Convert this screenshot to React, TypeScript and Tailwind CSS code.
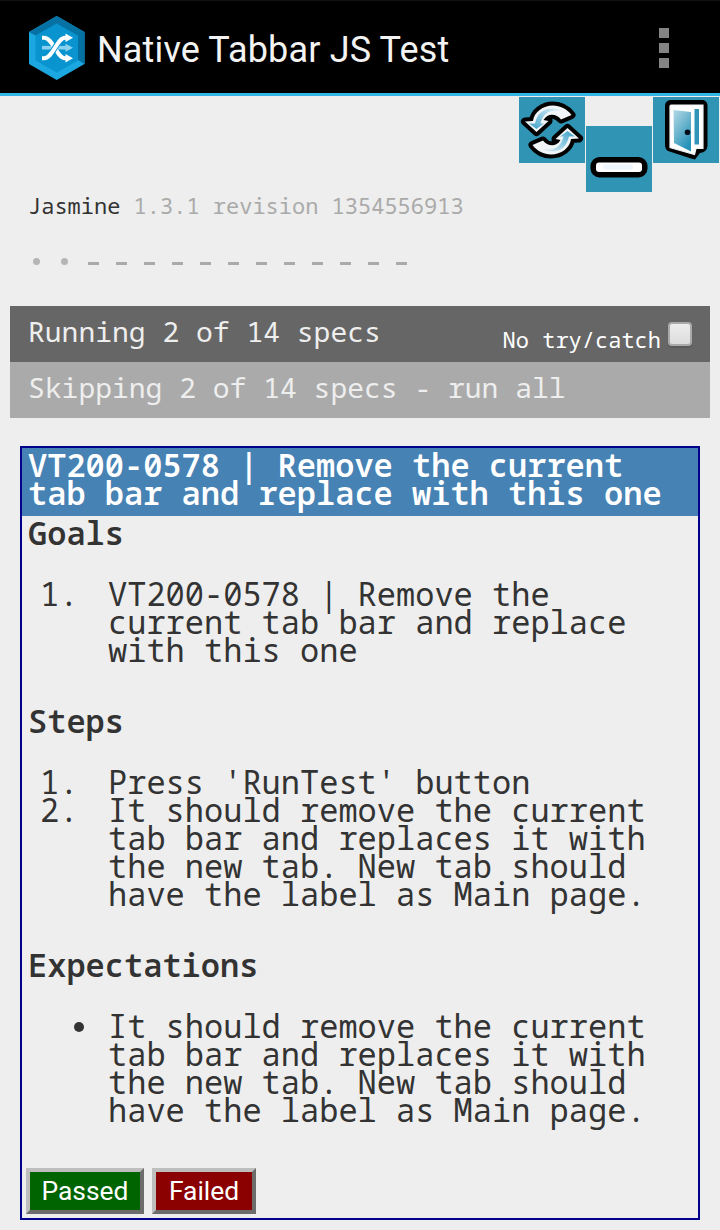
import React from "react";

function AppIcon() {
  return (
    <svg width="58" height="66" viewBox="28 15 58 66" className="shrink-0">
      <path d="M56.700 16 L84.500 32 V64 L56.700 80 L29 64 V32Z" fill="#1ba8e0" />
      <path d="M29 32 L56.700 16 L84.500 32 V64 L78 60 L56.700 48 L35.500 35.500Z" fill="#0572a3" />
      <path d="M56.700 23.500 L78 35.500 V60.500 L56.700 72.500 L35.500 60.500 V35.500Z" fill="#0993cf" />
      <g fill="none" strokeWidth="4">
        <path d="M42 47.700H67" stroke="#8bd0ee" strokeWidth="3.6" />
        <path d="M65.500 43.700L73 47.700L65.500 51.700Z" fill="#8bd0ee" stroke="none" />
        <path d="M42 37.700H44C53 37.700 57 58.300 65 58.300H68" stroke="#fff" />
        <path d="M45 58C53 57 57 38.500 64 38" stroke="#0993cf" strokeWidth="6" />
        <path d="M42 58.300H44C53 58.300 57 37.700 65 37.700H68" stroke="#fff" />
        <path d="M65.500 33.400L73 37.700L65.500 42ZM65.500 54L73 58.300L65.500 62.600Z" fill="#fff" stroke="none" />
      </g>
    </svg>
  );
}

function CurvedArrow() {
  const shape = "M6 24.500L14 24C15 15 24 8.500 34 8.500C41 8.500 48 12 52.500 18L42 22.500C38 17 29 15 24.500 23L29.500 24L17.500 35Z";
  return (
    <>
      <path d={shape} fill="#000" stroke="#000" strokeWidth="8" strokeLinejoin="round" />
      <path d={shape} fill="#f1f5f7" />
      <path d="M10 26.500L16 26.500C18 17 24 11.500 33 11.500C37 11.500 40 12.500 42 14C31 12 24 16 21.500 26.500L25 26.500L17.500 32Z" fill="url(#arrow)" />
    </>
  );
}

function RefreshIcon() {
  return (
    <svg width="66" height="66" viewBox="0 0 66 66" className="bg-[#3094b5]">
      <defs>
        <linearGradient id="arrow" x1="0" y1="1" x2="1" y2="0">
          <stop offset="0" stopColor="#3f9fc6" />
          <stop offset=".5" stopColor="#8cc9e1" />
          <stop offset="1" stopColor="#e8f2f6" />
        </linearGradient>
      </defs>
      <CurvedArrow />
      <g transform="rotate(180 33 33)">
        <CurvedArrow />
      </g>
    </svg>
  );
}

function MinimizeIcon() {
  return (
    <svg width="66" height="66" viewBox="0 0 66 66" className="mt-[29px] bg-[#3094b5]">
      <rect x="4.500" y="31" width="57" height="20.500" rx="9" fill="#000" />
      <rect x="10" y="36.500" width="46" height="9.500" rx="3" fill="#fff" />
      <rect x="17" y="38.500" width="30" height="5" rx="2" fill="#eff5fd" />
    </svg>
  );
}

function DoorIcon() {
  return (
    <svg width="66" height="66" viewBox="0 0 66 66" className="bg-[#3094b5]">
      <defs>
        <linearGradient id="door" x1="0" y1="0" x2=".6" y2="1">
          <stop offset="0" stopColor="#b5d9e7" />
          <stop offset=".4" stopColor="#7dbdd3" />
          <stop offset="1" stopColor="#2793b9" />
        </linearGradient>
      </defs>
      <path d="M17 3H50Q54.500 4 54.500 9V49Q54 55 47 56L42 62.500L38 61.500L15 54Q12 52 12 48V9Q12 4 17 3Z" fill="#000" />
      <path d="M18 8H50V51.500H43L41.500 57.500L17 50.500V9Z" fill="#fff" stroke="#edf2f4" strokeWidth="1.200" />
      <path d="M20.500 13L38 15V54.500L21 46Z" fill="url(#door)" />
      <path d="M41.500 12H46V47.500H41.500Z" fill="#2f94b8" />
      <circle cx="34.500" cy="35.300" r="2.800" fill="#000d18" />
    </svg>
  );
}

function Header() {
  return (
    <header className="flex h-24 items-start border-b-[3px] border-t border-b-[#33b5e5] border-t-[#111] bg-black">
      <div className="flex h-full w-full items-center pl-7 pr-[51px] pt-[2px]">
        <AppIcon />
        <h1 className="ml-[11px] mt-[3px] whitespace-nowrap font-['Roboto',sans-serif] text-[36px] leading-[44px] tracking-[0.15px] text-[#f3f3f3]">
          Native Tabbar JS Test
        </h1>
        <div className="ml-auto flex flex-col gap-[5px]">
          {[0, 1, 2].map((n) => (
            <span key={n} className="size-[10px] bg-[#848484]" />
          ))}
        </div>
      </div>
    </header>
  );
}

function Lines({ lines }: { lines: string[] }) {
  return (
    <>
      {lines.map((line) => (
        <span key={line} className="block whitespace-nowrap">{line}</span>
      ))}
    </>
  );
}

function Item({ marker, lines }: { marker?: string; lines: string[] }) {
  return (
    <li className="flex">
      <span className="flex w-[86px] shrink-0 pl-[18px]">
        {marker ?? <span className="ml-[34px] mt-[10px] size-[10px] rounded-full bg-[#333]" />}
      </span>
      <div>
        <Lines lines={lines} />
      </div>
    </li>
  );
}

const result = [
  "It should remove the current",
  "tab bar and replaces it with",
  "the new tab. New tab should",
  "have the label as Main page.",
];

export default function App() {
  return (
    <div className="flex h-[1230px] w-[720px] flex-col overflow-hidden bg-[#eee] text-[#333] font-['Noto_Sans_Mono','DejaVu_Sans_Mono',monospace]">
      <Header />
      <div className="flex h-[95px] justify-end gap-px pr-px pt-px">
        <RefreshIcon />
        <MinimizeIcon />
        <DoorIcon />
      </div>
      <div className="h-7 whitespace-pre pl-7 text-[22px] leading-7">
        Jasmine <span className="text-[#aaa]">1.3.1 revision 1354556913</span>
      </div>
      <div className="mt-8 flex h-[55px] pl-7">
        {Array.from({ length: 14 }, (_, n) => (
          <span key={n} className="flex w-7 items-start">
            {n < 2 ? (
              <span className="ml-[5px] mt-[7px] h-[7px] w-[7px] rounded-full bg-[#b5b5b5]" />
            ) : (
              <span className="ml-1 mt-[11px] h-[3px] w-[11px] bg-[#aaa]" />
            )}
          </span>
        ))}
      </div>
      <div className="mx-[10px] flex h-14 bg-[#666] pl-[18px] pr-[18px] text-[28px] leading-[50px] text-[#eee]">
        <span className="whitespace-nowrap">Running 2 of 14 specs</span>
        <label className="ml-auto flex whitespace-nowrap text-[22px] leading-[66px] text-white">
          No try/catch
          <span className="ml-[7px] mt-4 h-6 w-6 shrink-0 rounded-[4px] border-2 border-[#aaa] bg-linear-to-b from-[#eee] to-[#dcdcdc] shadow-[0_2px_1px_#5a5a5a]" />
        </label>
      </div>
      <div className="mx-[10px] h-14 whitespace-nowrap bg-[#aaa] pl-[18px] text-[28px] leading-[50px] text-[#eee]">
        Skipping 2 of 14 specs - run all
      </div>
      <main className="mx-5 mt-7 h-[774px] border-2 border-[#00008b] text-[32px] leading-7">
        <h2 className="h-[68px] bg-[#4682b4] pl-[6px] pt-[3px] font-semibold text-white">
          <Lines lines={["VT200-0578 | Remove the current", "tab bar and replace with this one"]} />
        </h2>
        <h3 className="mt-[3px] pl-[6px] font-semibold">Goals</h3>
        <ol className="mt-[33px]">
          <Item marker="1." lines={["VT200-0578 | Remove the", "current tab bar and replace", "with this one"]} />
        </ol>
        <h3 className="mt-[43px] pl-[6px] font-semibold">Steps</h3>
        <ol className="mt-[33px]">
          <Item marker="1." lines={["Press 'RunTest' button"]} />
          <Item marker="2." lines={result} />
        </ol>
        <h3 className="mt-[43px] pl-[6px] font-semibold">Expectations</h3>
        <ul className="mt-[33px]">
          <Item lines={result} />
        </ul>
        <div className="mt-11 flex gap-2 pl-1 font-['Roboto',sans-serif] text-[26.4px] leading-[38px] text-white">
          <button className="h-[46px] w-[118px] whitespace-nowrap border-4 border-b-[#6c6c6c] border-l-[#bebebe] border-r-[#6c6c6c] border-t-[#bebebe] bg-[#006400]">Passed</button>
          <button className="h-[46px] w-[104px] whitespace-nowrap border-4 border-b-[#6c6c6c] border-l-[#bebebe] border-r-[#6c6c6c] border-t-[#bebebe] bg-[#8b0000]">Failed</button>
        </div>
      </main>
    </div>
  );
}
